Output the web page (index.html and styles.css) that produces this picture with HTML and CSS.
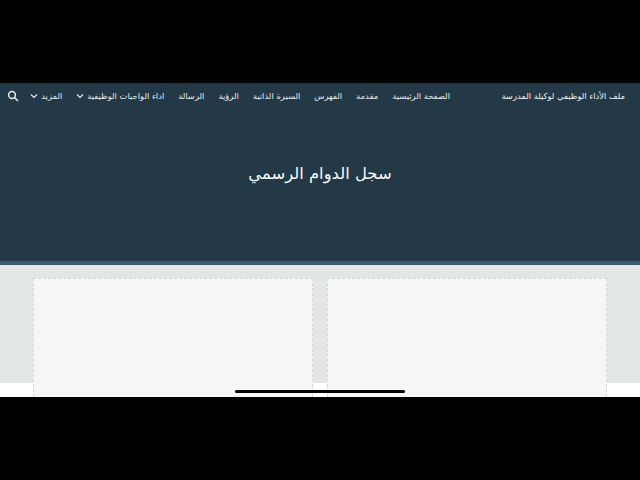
FILE: index.html
```html
<!DOCTYPE html>
<html lang="ar" dir="rtl">
<head>
<meta charset="utf-8">
<title>سجل الدوام الرسمي</title>
<link rel="stylesheet" href="styles.css">
</head>
<body>
<div class="screen">
  <header class="hero">
    <nav class="nav">
      <span class="site">ملف الأداء الوظيفي لوكيلة المدرسة</span>
      <ul class="menu">
        <li>الصفحة الرئيسية</li>
        <li>مقدمة</li>
        <li>الفهرس</li>
        <li>السيرة الذاتية</li>
        <li>الرؤية</li>
        <li>الرسالة</li>
        <li class="drop">اداء الواجبات الوظيفية
          <svg class="chev" viewBox="0 0 8 6"><path d="M1 1.5 4 4.5 7 1.5"/></svg></li>
        <li class="drop">المزيد
          <svg class="chev" viewBox="0 0 8 6"><path d="M1 1.5 4 4.5 7 1.5"/></svg></li>
      </ul>
      <svg class="search" viewBox="0 0 12 12"><circle cx="5" cy="5" r="3.4"/><path d="M7.6 7.6 11 11"/></svg>
    </nav>
    <h1 class="title">سجل الدوام الرسمي</h1>
  </header>
  <div class="strip"></div>
  <main class="content">
    <section class="card"></section>
    <section class="card"></section>
  </main>
  <div class="home"></div>
</div>
</body>
</html>
```
FILE: styles.css
```css
* { box-sizing: border-box; }
html, body { margin: 0; height: 100%; background: #000; overflow: hidden; }
body { padding-top: 83px; font-family: "DejaVu Sans", sans-serif; }
.screen {
  position: relative;
  height: 314px;
  overflow: hidden;
  background: #fff;
}
.hero { height: 178px; background: #233947; color: #fff; }
.nav {
  display: flex;
  align-items: center;
  height: 26px;
  padding: 0 15px 0 7px;
}
.site { flex: none; width: 123px; font-size: 8.4px; white-space: nowrap; color: #f0f3f4; }
.menu {
  display: flex;
  align-items: center;
  gap: 14px;
  list-style: none;
  margin: 0 52px 0 0;
  padding: 0;
  font-size: 8.4px;
  white-space: nowrap;
  color: #e6eaec;
}
.drop { display: flex; align-items: center; gap: 3px; }
.chev { width: 8px; height: 6px; fill: none; stroke: #e6eaec; stroke-width: 1.2; }
.search { flex: none; width: 12px; height: 12px; margin-right: auto; fill: none; stroke: #e6eaec; stroke-width: 1.5; }
.title {
  margin: 51px 0 0;
  text-align: center;
  font-size: 16.4px;
  font-weight: 400;
  line-height: 28px;
  color: #f6f8f8;
}
.strip { height: 5px; background: #3a5a70; border-bottom: 1px solid #dfe5e8; }
.content {
  display: flex;
  justify-content: center;
  gap: 14px;
  padding-top: 12px;
  height: 131px;
  background: linear-gradient(#e3e6e7 0 117px, #fff 117px);
}
.card {
  flex: none;
  width: 280px;
  height: 119px;
  background: #f6f6f6;
  border: 1px dashed #d6d6d6;
  border-bottom: 0;
}
.home {
  position: absolute;
  left: 235px;
  top: 307px;
  width: 170px;
  height: 3px;
  border-radius: 2px;
  background: #000;
}
```
